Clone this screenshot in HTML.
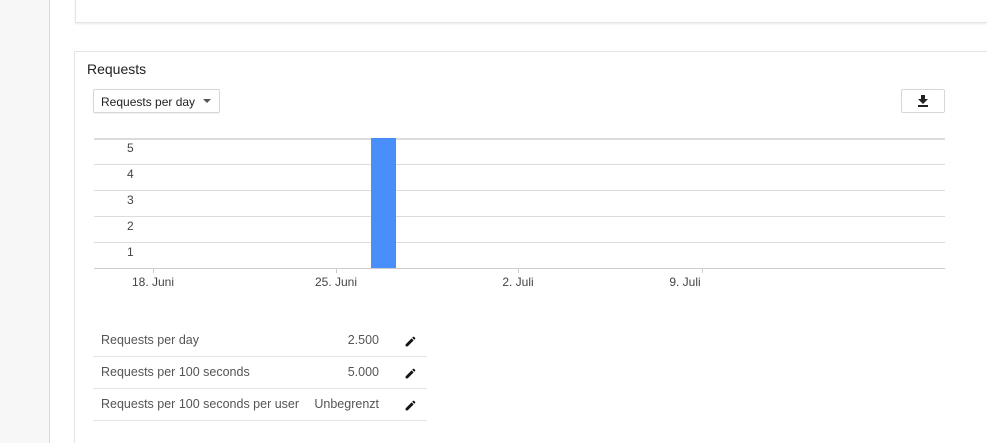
<!DOCTYPE html>
<html style="overflow:hidden"><head><style>
html,body{overflow:hidden;height:443px}
body{margin:0;width:987px;background:#fff;position:relative;font-family:"Liberation Sans",Roboto,sans-serif;}
.side{position:absolute;left:0;top:0;width:49px;height:443px;background:#f7f7f7;border-right:1px solid #dadada;}
.card1{position:absolute;left:75px;top:-2px;width:920px;height:23px;border:1px solid #e4e4e4;box-shadow:0 1px 2px rgba(0,0,0,.08);}
.card2{position:absolute;left:74px;top:51px;width:920px;height:392px;border:1px solid #e4e4e4;border-bottom:none}
.t{position:absolute;color:#212121}
.grid{position:absolute;left:94px;width:851px;height:1px;background:#dcdcdc}
.yl{position:absolute;left:127px;font-size:12px;color:#444}
.xl{position:absolute;top:275px;font-size:12px;color:#444;transform:translateX(-50%)}
.tick{position:absolute;top:268px;width:1px;height:5px;background:#ccc}
.row{position:absolute;left:93px;width:334px;height:31px;border-bottom:1px solid #e6e6e6;font-size:12.5px;color:#555}
.row span{position:absolute;top:8px}
</style></head><body>
<div class="side"></div>
<div class="card1"></div>
<div class="card2"></div>
<div class="t" style="left:87px;top:61px;font-size:14px">Requests</div>
<div style="position:absolute;left:93px;top:89px;width:125px;height:22px;border:1px solid #d6d6d6;border-radius:2px;font-size:12px;color:#222;box-shadow:0 1px 1px rgba(0,0,0,.06)"><span style="position:absolute;left:7px;top:5px">Requests per day</span><span style="position:absolute;left:109px;top:9px;border-left:4px solid transparent;border-right:4px solid transparent;border-top:4px solid #555"></span></div>
<div style="position:absolute;left:901px;top:89px;width:42px;height:22px;border:1px solid #d6d6d6;border-radius:2px">
<svg style="position:absolute;left:15px;top:5px" width="12" height="12" viewBox="0 0 12 12"><path d="M4 0h4v4h3L6 9 1 4h3z M1 10h10v2H1z" fill="#222"/></svg></div>
<div class="grid" style="top:138px;height:2px"></div>
<div class="grid" style="top:164px"></div>
<div class="grid" style="top:190px"></div>
<div class="grid" style="top:216px"></div>
<div class="grid" style="top:242px"></div>
<div class="grid" style="top:268px;background:#ccc"></div>
<div class="yl" style="top:141px">5</div>
<div class="yl" style="top:167px">4</div>
<div class="yl" style="top:193px">3</div>
<div class="yl" style="top:219px">2</div>
<div class="yl" style="top:245px">1</div>
<div style="position:absolute;left:371px;top:138px;width:25px;height:130px;background:#4a8ff9"></div>
<div class="tick" style="left:153px"></div><div class="tick" style="left:336px"></div><div class="tick" style="left:518px"></div><div class="tick" style="left:702px"></div>
<div class="xl" style="left:153px">18. Juni</div>
<div class="xl" style="left:336px">25. Juni</div>
<div class="xl" style="left:518px">2. Juli</div>
<div class="xl" style="left:685px">9. Juli</div>
<div class="row" style="top:325px"><span style="left:8px">Requests per day</span><span style="right:48px">2.500</span></div>
<div class="row" style="top:357px"><span style="left:8px">Requests per 100 seconds</span><span style="right:48px">5.000</span></div>
<div class="row" style="top:389px"><span style="left:8px">Requests per 100 seconds per user</span><span style="right:48px">Unbegrenzt</span></div>
<svg style="position:absolute;left:404px;top:335px" width="13" height="13" viewBox="0 0 24 24"><path d="M3 17.25V21h3.75L17.81 9.94l-3.75-3.75L3 17.25zM20.71 7.04a1 1 0 000-1.41l-2.340-2.34a1 1 0 00-1.41 0l-1.83 1.83 3.75 3.75 1.83-1.83z" fill="#111"/></svg>
<svg style="position:absolute;left:404px;top:367px" width="13" height="13" viewBox="0 0 24 24"><path d="M3 17.25V21h3.75L17.81 9.94l-3.75-3.75L3 17.25zM20.71 7.04a1 1 0 000-1.41l-2.34-2.34a1 1 0 00-1.41 0l-1.83 1.83 3.75 3.75 1.83-1.83z" fill="#111"/></svg>
<svg style="position:absolute;left:404px;top:399px" width="13" height="13" viewBox="0 0 24 24"><path d="M3 17.25V21h3.75L17.81 9.94l-3.75-3.75L3 17.25zM20.71 7.04a1 1 0 000-1.41l-2.34-2.34a1 1 0 00-1.41 0l-1.83 1.83 3.75 3.75 1.83-1.83z" fill="#111"/></svg>
</body></html>
